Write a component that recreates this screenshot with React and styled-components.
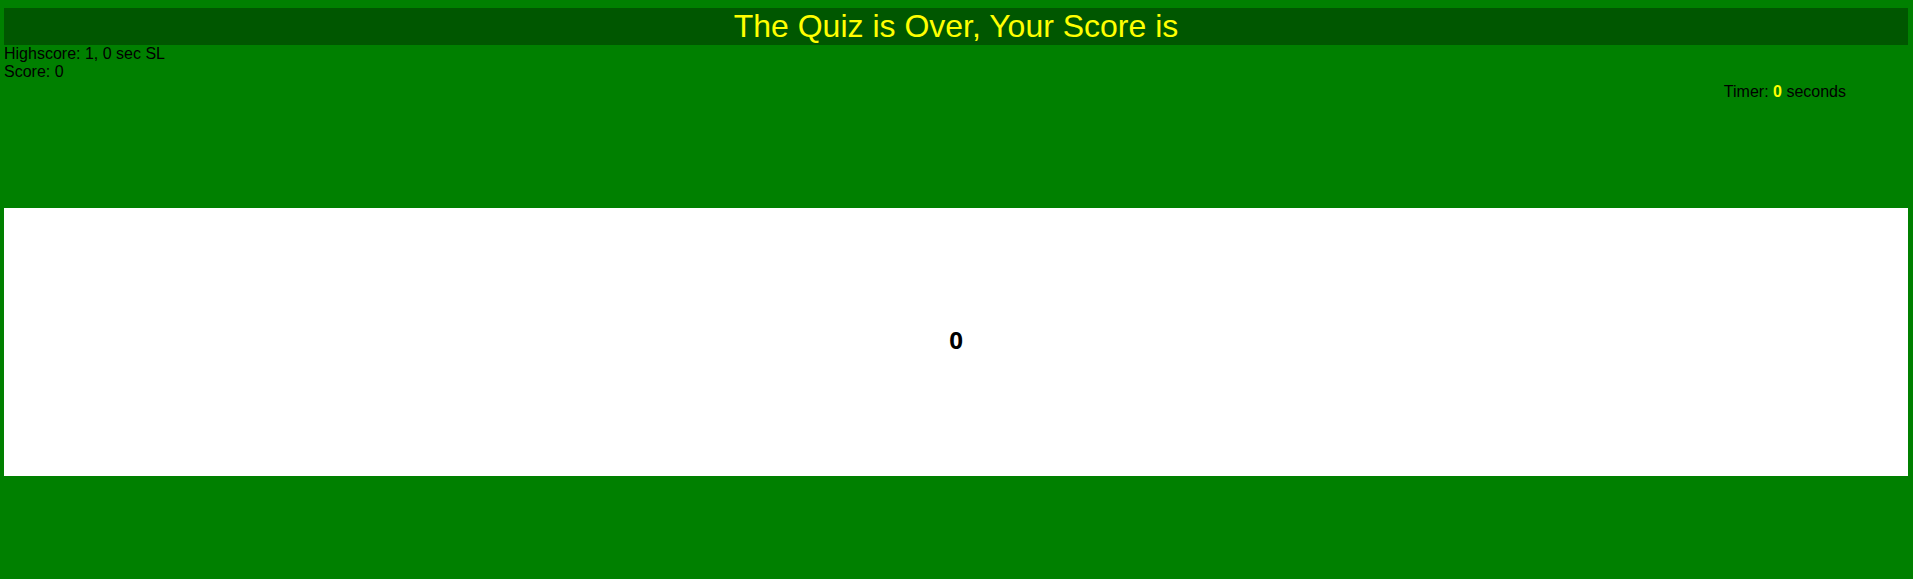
import styled, { createGlobalStyle } from "styled-components";

const GlobalStyle = createGlobalStyle`
  html, body {
    margin: 0;
    padding: 0;
    background: #008000;
    min-height: 100%;
  }
  body {
    padding: 8px 5px 0 4px;
    font-family: "Liberation Sans", Arial, sans-serif;
  }
`;

const Title = styled.h1`
  margin: 0;
  background: #005700;
  color: #ffff00;
  font-size: 32px;
  font-weight: normal;
  line-height: 37px;
  text-align: center;
`;

const Info = styled.div`
  display: flex;
  justify-content: space-between;
  height: 163px;
`;

const Stats = styled.div`
  font-size: 16px;
  line-height: 18px;
  color: #000;
`;

const Timer = styled.div`
  margin-top: 38px;
  margin-right: 62px;
  font-size: 16px;
  line-height: 18px;
  color: #000;
  span {
    color: #ffff00;
    font-weight: bold;
  }
`;

const ScoreBox = styled.div`
  height: 268px;
  box-sizing: border-box;
  padding-bottom: 5px;
  background: #fff;
  display: flex;
  align-items: center;
  justify-content: center;
  font-family: "Open Sans", sans-serif;
  font-weight: bold;
  font-size: 24px;
  color: #000;
`;

export default function App() {
  return (
    <>
      <GlobalStyle />
      <Title>The Quiz is Over, Your Score is</Title>
      <Info>
        <Stats>
          <div>Highscore: 1, 0 sec SL</div>
          <div>Score: 0</div>
        </Stats>
        <Timer>
          Timer: <span>0</span> seconds
        </Timer>
      </Info>
      <ScoreBox>0</ScoreBox>
    </>
  );
}
